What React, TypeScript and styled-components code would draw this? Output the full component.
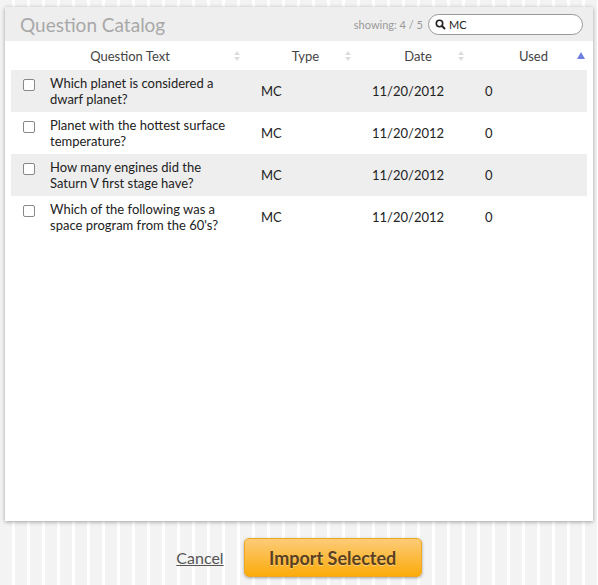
import * as React from 'react';
import styled, { createGlobalStyle } from 'styled-components';

const Global = createGlobalStyle`
  html, body { margin: 0; height: 100%; }
  body {
    font-family: Lato, "Open Sans", sans-serif;
    background: repeating-linear-gradient(90deg, #f3f3f3 0 12px, #ffffff 12px 15px);
  }
`;

const Page = styled.div`
  width: 598px;
  height: 585px;
  padding: 7px 5px 0;
  box-sizing: border-box;
`;

const Panel = styled.div`
  height: 514px;
  background: #fff;
  box-shadow: 0 1px 4px rgba(0, 0, 0, 0.35);
  display: flex;
  flex-direction: column;
`;

const Header = styled.div`
  height: 34px;
  background: #eeeeee;
  display: flex;
  align-items: center;
  padding: 0 10px 0 15px;
`;

const Title = styled.div`
  font-size: 19px;
  color: #a8a8a8;
  flex: 1;
`;

const Showing = styled.span`
  font-size: 11px;
  color: #999;
  margin-right: 5px;
`;

const Search = styled.div`
  width: 155px;
  height: 21px;
  border: 1px solid #999;
  border-radius: 11px;
  background: #fff;
  display: flex;
  align-items: center;
  padding-left: 6px;
  gap: 3px;
  font-size: 11px;
  color: #222;
  box-sizing: border-box;
`;

const HeadRow = styled.div`
  display: grid;
  grid-template-columns: 35px 206px 111px 113px 1fr;
  height: 29px;
  align-items: center;
  font-size: 13px;
  color: #444;
`;

const HeadCell = styled.div<{ $shift: number }>`
  display: flex;
  justify-content: center;
  position: relative;
  height: 100%;
  align-items: center;
  padding-left: ${(p) => Math.max(p.$shift, 0)}px;
  padding-right: ${(p) => Math.max(-p.$shift, 0)}px;
`;

const SortIcon = styled.span<{ $up?: boolean }>`
  position: absolute;
  right: ${(p) => (p.$up ? 8 : 5)}px;
  top: ${(p) => (p.$up ? 5 : 8)}px;
`;

const Row = styled.div<{ $odd: boolean }>`
  display: grid;
  height: 42px;
  margin: 0 6px;
  grid-template-columns: 39px 211px 111px 113px 1fr;
  background: ${(p) => (p.$odd ? '#eeeeee' : '#fff')};
  font-size: 13px;
  color: #222;
  line-height: 16px;
  padding-top: 5px;
  box-sizing: border-box;
`;

const Check = styled.span`
  width: 10px;
  height: 10px;
  border: 1px solid #888;
  border-radius: 2px;
  background: #fff;
  margin: 4px 0 0 12px;
`;

const Cell = styled.div<{ $pad?: number }>`
  padding-top: ${(p) => p.$pad ?? 0}px;
`;

const QText = styled.div`
  width: 176px;
`;

const Footer = styled.div`
  display: flex;
  justify-content: center;
  align-items: center;
  gap: 20px;
  padding-top: 17px;
`;

const Cancel = styled.a`
  font-size: 16px;
  color: #555;
  text-decoration: underline;
`;

const Primary = styled.button`
  width: 178px;
  height: 39px;
  border: 1px solid #f0a820;
  border-radius: 5px;
  background: linear-gradient(#fdcb78, #fbab0a);
  font-family: Lato, sans-serif;
  font-size: 18px;
  font-weight: bold;
  color: #5a4020;
  box-shadow: 0 1px 3px rgba(0, 0, 0, 0.35);
  text-shadow: 0 1px 0 rgba(255, 255, 255, 0.4);
`;

const Sort = () => (
  <SortIcon>
    <svg width="8" height="12" viewBox="0 0 8 12">
      <path d="M1 5 L4 1 L7 5 Z" fill="#ddd" />
      <path d="M1 7 L4 11 L7 7 Z" fill="#ddd" />
    </svg>
  </SortIcon>
);

const rows = [
  'Which planet is considered a dwarf planet?',
  'Planet with the hottest surface temperature?',
  'How many engines did the Saturn V first stage have?',
  "Which of the following was a space program from the 60's?",
];

export default function App() {
  return (
    <Page>
      <Global />
      <Panel>
        <Header>
          <Title>Question Catalog</Title>
          <Showing>showing: 4 / 5</Showing>
          <Search>
            <svg width="11" height="11" viewBox="0 0 11 11">
              <circle cx="4.5" cy="4.5" r="3.2" stroke="#222" strokeWidth="1.6" fill="none" />
              <path d="M7 7 L10 10" stroke="#222" strokeWidth="2" />
            </svg>
            MC
          </Search>
        </Header>
        <HeadRow>
          <span />
          <HeadCell $shift={-26}>Question Text<Sort /></HeadCell>
          <HeadCell $shift={8}>Type<Sort /></HeadCell>
          <HeadCell $shift={9}>Date<Sort /></HeadCell>
          <HeadCell $shift={4}>
            Used
            <SortIcon $up>
              <svg width="8" height="7" viewBox="0 0 8 7"><path d="M0 7 L4 0 L8 7 Z" fill="#6f7fe0" /></svg>
            </SortIcon>
          </HeadCell>
        </HeadRow>
        {rows.map((q, i) => (
          <Row key={i} $odd={i % 2 === 0}>
            <Check />
            <Cell><QText>{q}</QText></Cell>
            <Cell $pad={8}>MC</Cell>
            <Cell $pad={8}>11/20/2012</Cell>
            <Cell $pad={8}>0</Cell>
          </Row>
        ))}
      </Panel>
      <Footer>
        <Cancel>Cancel</Cancel>
        <Primary>Import Selected</Primary>
      </Footer>
    </Page>
  );
}
